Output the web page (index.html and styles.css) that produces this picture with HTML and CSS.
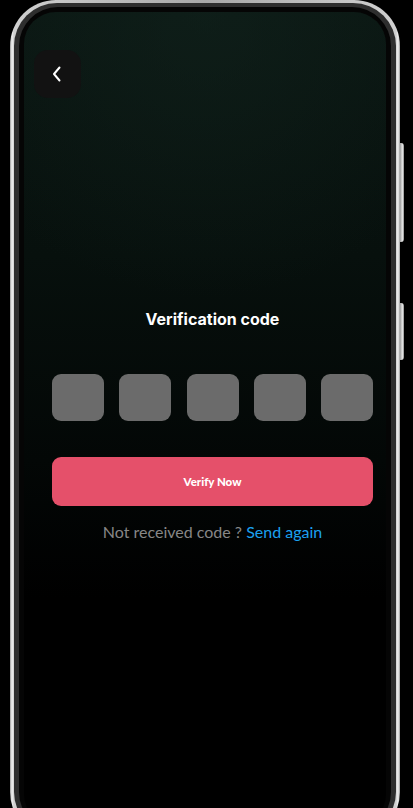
FILE: index.html
```html
<!DOCTYPE html>
<html lang="en">
<head>
<meta charset="utf-8">
<title>Verification code</title>
<link rel="stylesheet" href="styles.css">
</head>
<body>
<div class="phone">
  <span class="side-btn side-btn--upper"></span>
  <span class="side-btn side-btn--lower"></span>
  <div class="bezel">
    <div class="bezel-inner">
      <div class="screen">
        <button class="back" aria-label="Back">
          <svg width="10" height="16" viewBox="0 0 10 16" fill="none">
            <path d="M7.5 1.5 L2 8 L7.5 14.5" stroke="#ffffff" stroke-width="2" stroke-linecap="round" stroke-linejoin="round"/>
          </svg>
        </button>
        <div class="content">
          <h1 class="title">Verification code</h1>
          <div class="otp">
            <span class="otp-box"></span>
            <span class="otp-box"></span>
            <span class="otp-box"></span>
            <span class="otp-box"></span>
            <span class="otp-box"></span>
          </div>
          <button class="verify">Verify Now</button>
          <p class="resend">Not received code ? <span class="resend-link">Send again</span></p>
        </div>
      </div>
    </div>
  </div>
</div>
</body>
</html>
```
FILE: styles.css
```css
html, body {
  margin: 0;
  padding: 0;
  height: 808px;
  overflow: hidden;
  background: #000;
}

body {
  display: flex;
  align-items: flex-start;
  padding-left: 10px;
  font-family: "Lato", "Liberation Sans", sans-serif;
}

.phone {
  position: relative;
  width: 390px;
  height: 838px;
  flex: none;
  border-radius: 46px;
  padding: 3px 4px;
  box-sizing: border-box;
  background: linear-gradient(90deg, #9a9a9a 0%, #f2f2f2 0.5%, #d0d0d0 1%, #a8a8a8 50%, #d0d0d0 99%, #f2f2f2 99.5%, #9a9a9a 100%);
}

.side-btn {
  position: absolute;
  right: -4px;
  width: 4px;
  border-radius: 0 3px 3px 0;
  background: linear-gradient(90deg, #9a9a9a, #e6e6e6 60%, #8c8c8c);
}

.side-btn--upper {
  top: 143px;
  height: 99px;
}

.side-btn--lower {
  top: 303px;
  height: 57px;
}

.bezel {
  height: 100%;
  box-sizing: border-box;
  border-radius: 43px;
  padding: 4px 5px;
  background: #2e2e2e;
}

.bezel-inner {
  height: 100%;
  box-sizing: border-box;
  border-radius: 39px;
  padding: 5px 5px;
  background: #050505;
}

.screen {
  height: 100%;
  box-sizing: border-box;
  border-radius: 32px;
  padding: 38px 13px 0 10px;
  overflow: hidden;
  background:
    radial-gradient(ellipse 80% 35% at 50% 0%, rgba(18, 36, 30, 0.55), rgba(0, 0, 0, 0) 100%),
    linear-gradient(180deg, #0a1612 0%, #07100d 30%, #030706 55%, #000000 72%, #000000 100%);
  display: flex;
  flex-direction: column;
}

.back {
  width: 47px;
  height: 48px;
  border: none;
  border-radius: 14px;
  background: #121212;
  display: flex;
  align-items: center;
  justify-content: center;
  padding: 0 2px 0 0;
  cursor: pointer;
}

.content {
  padding-left: 18px;
  display: flex;
  flex-direction: column;
}

.title {
  margin: 211px 0 0;
  font-family: "Inter", "Liberation Sans", sans-serif;
  font-size: 16px;
  line-height: 20px;
  font-weight: 700;
  color: #ffffff;
  text-align: center;
}

.otp {
  margin-top: 45px;
  display: flex;
  justify-content: space-between;
}

.otp-box {
  width: 52px;
  height: 47px;
  border-radius: 9px;
  background: #6b6b6b;
}

.verify {
  margin-top: 36px;
  height: 49px;
  border: none;
  border-radius: 9px;
  background: #e5506a;
  color: #ffffff;
  font-family: "Lato", "Liberation Sans", sans-serif;
  font-weight: 900;
  font-size: 11.5px;
  cursor: pointer;
}

.resend {
  margin: 16px 0 0;
  font-size: 16px;
  line-height: 20px;
  color: #878787;
  text-align: center;
}

.resend-link {
  color: #1ba1f0;
}
```
